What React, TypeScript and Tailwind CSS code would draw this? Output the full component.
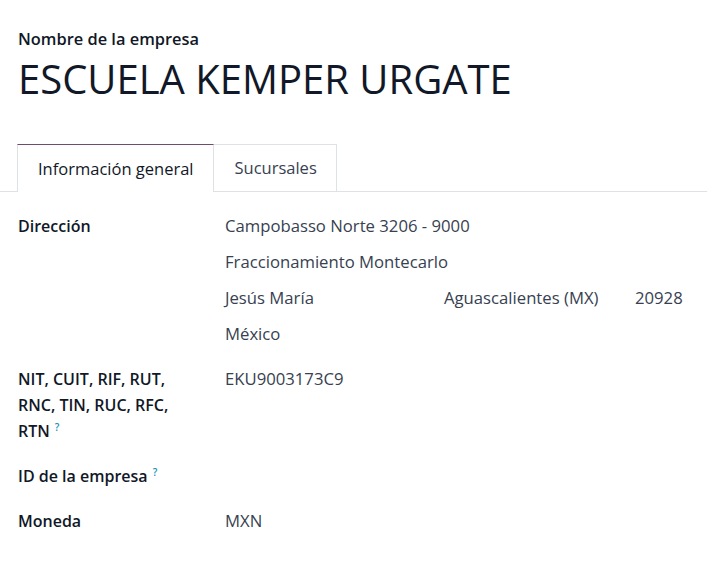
import React from "react";

const font = { fontFamily: '"Open Sans", "Noto Sans", sans-serif' };

function Help() {
  return (
    <span className="inline-block align-top ml-[5px] mt-[4px] text-[10px] leading-[10px] font-semibold text-[#1a8fb3]">
      ?
    </span>
  );
}

export default function App() {
  return (
    <div className="w-[707px] h-[571px] bg-white text-[#111827] overflow-hidden" style={font}>
      <div className="px-[18px] pt-[28px]">
        <div className="text-[16.4px] font-semibold leading-[22px] text-[#111827]">Nombre de la empresa</div>
        <div className="text-[40px] leading-[52px] mt-[3px] text-[#111827]">ESCUELA KEMPER URGATE</div>
      </div>
      <div className="mt-[39px] flex border-b border-[#dee2e6] pl-[17px] h-[48px]">
        <div className="-mb-px bg-white border-t border-t-[#714b67] border-x border-x-[#dee2e6] px-[20px] pt-px flex items-center text-[16.5px] text-[#111827]">
          Información general
        </div>
        <div className="-mb-px border-t border-r border-[#dee2e6] border-b pl-[20px] pr-[19px] pt-px flex items-center text-[16.5px] text-[#374151]">
          Sucursales
        </div>
      </div>
      <div className="px-[18px] pt-[22px]">
        <div className="grid grid-cols-[207px_1fr]">
          <div className="font-semibold leading-[24px] text-[16px]">Dirección</div>
          <div className="text-[#374151] leading-[24px] text-[16.7px]">
            <div className="h-[36px]">Campobasso Norte 3206 - 9000</div>
            <div className="h-[36px]">Fraccionamiento Montecarlo</div>
            <div className="h-[36px] flex">
              <div className="w-[219px]">Jesús María</div>
              <div className="w-[191px]">Aguascalientes (MX)</div>
              <div>20928</div>
            </div>
            <div className="h-[36px]">México</div>
          </div>

          <div className="font-semibold leading-[26px] pt-[8px] pr-[22px] text-[16px]">
            NIT, CUIT, RIF, RUT, RNC, TIN, RUC, RFC, RTN<Help />
          </div>
          <div className="text-[#374151] leading-[26px] pt-[8px] text-[16.7px]">EKU9003173C9</div>

          <div className="font-semibold leading-[26px] pt-[19px] text-[16px]">
            ID de la empresa<Help />
          </div>
          <div className="pt-[19px]"></div>

          <div className="font-semibold leading-[26px] pt-[19px] text-[16px]">Moneda</div>
          <div className="text-[#374151] leading-[26px] pt-[19px] text-[16.7px]">MXN</div>
        </div>
      </div>
    </div>
  );
}
